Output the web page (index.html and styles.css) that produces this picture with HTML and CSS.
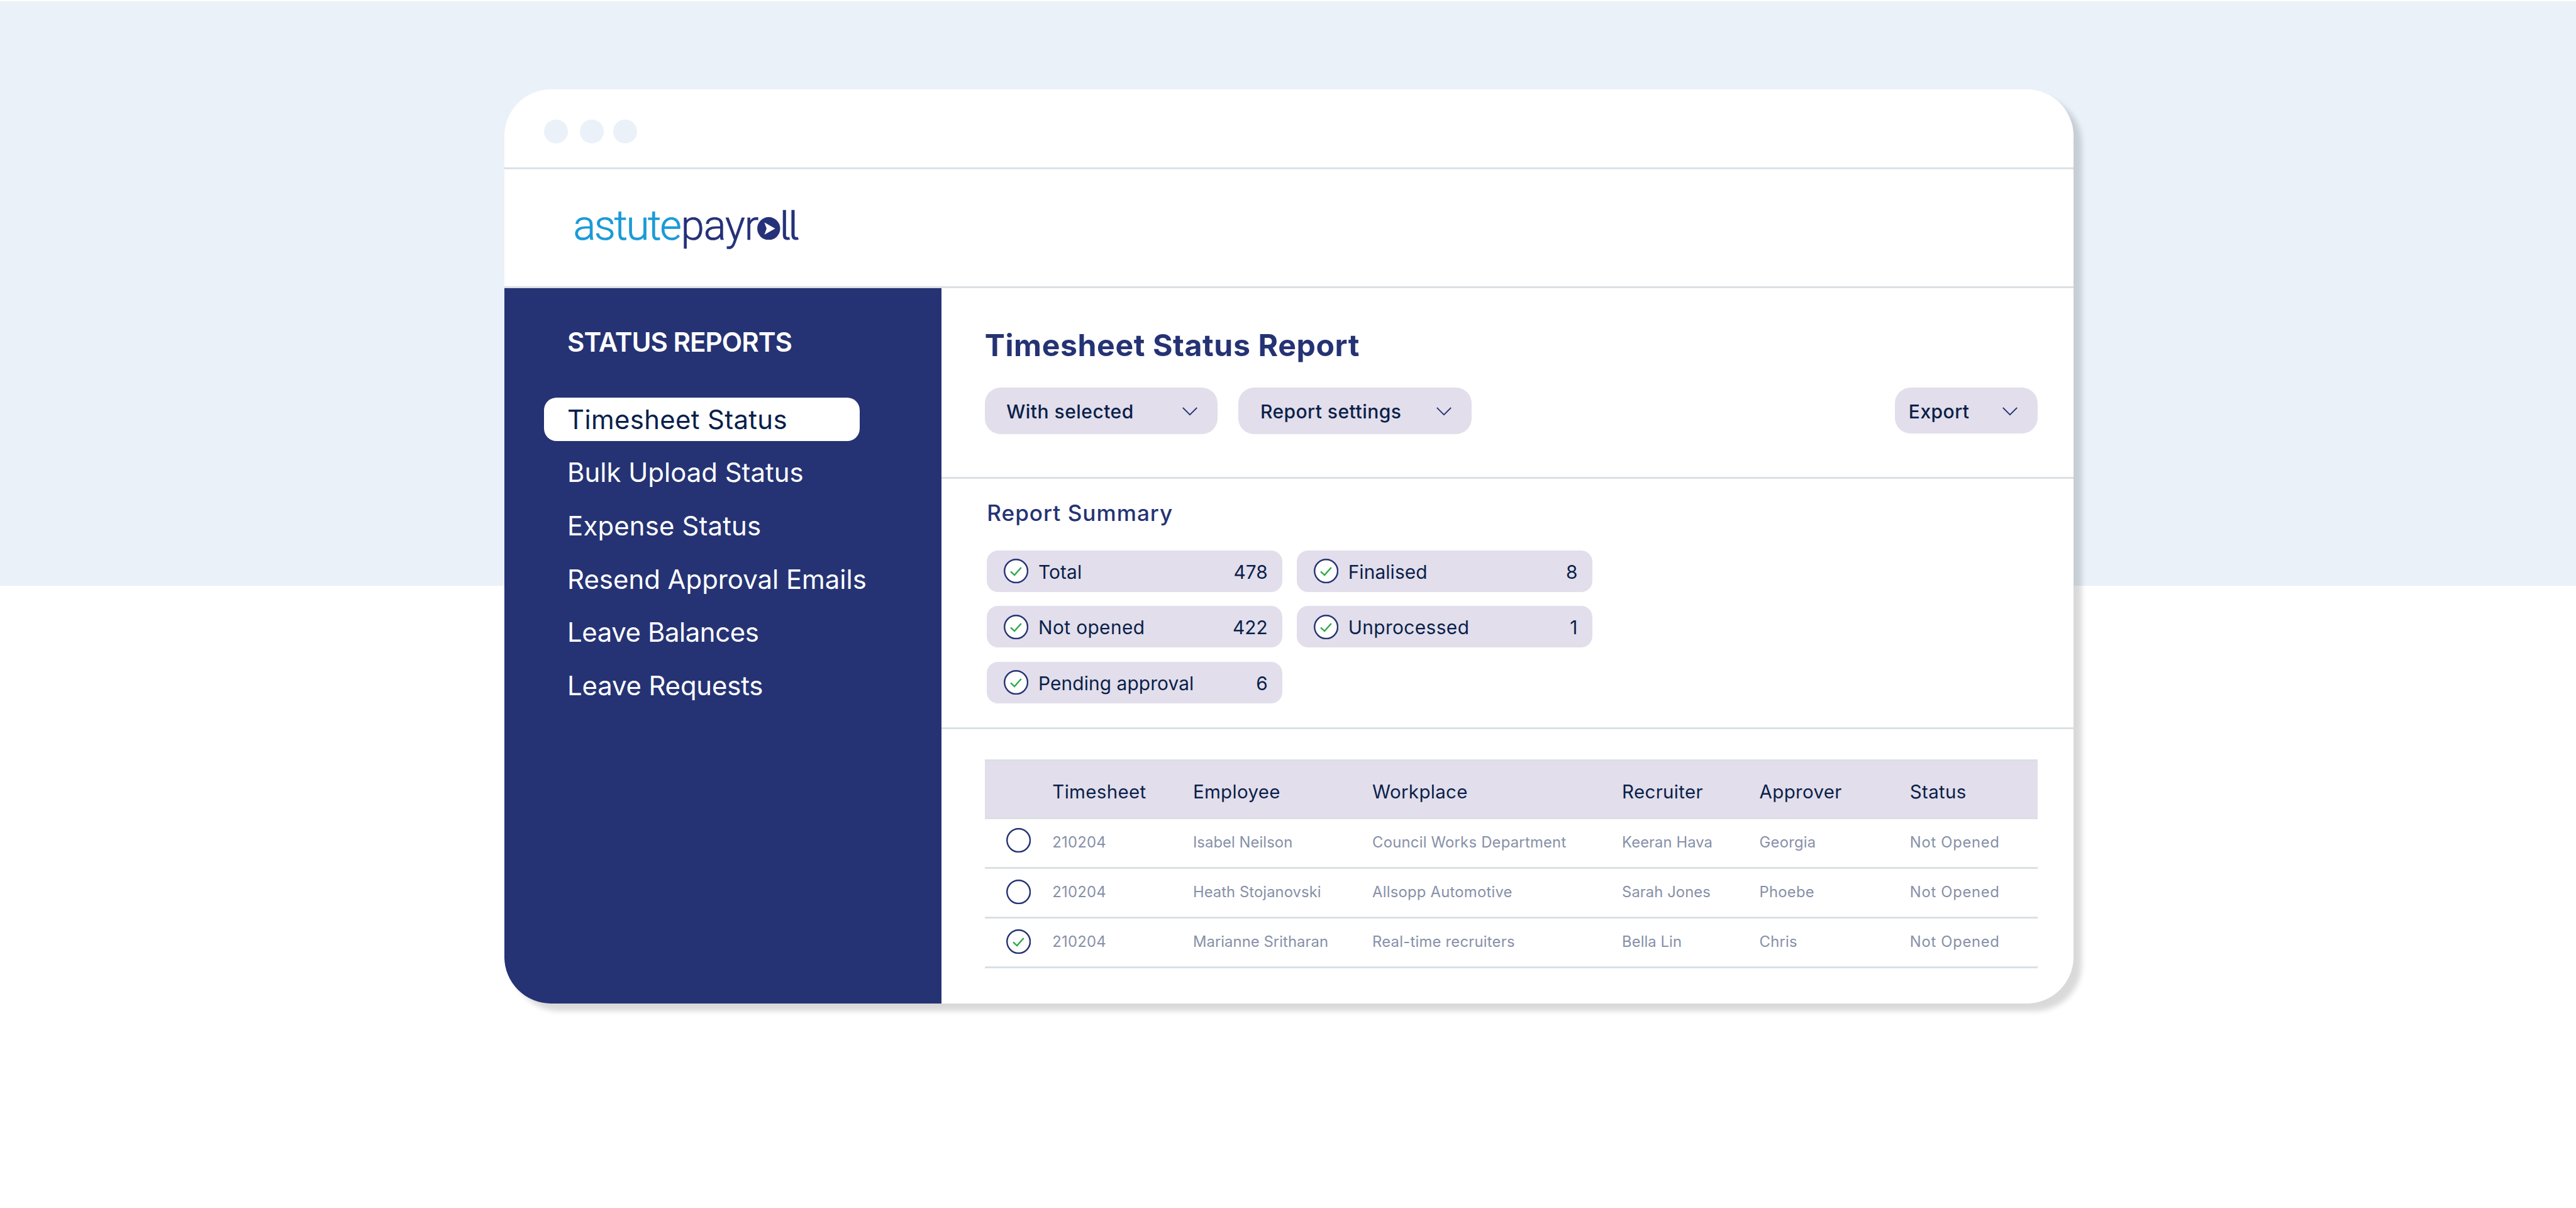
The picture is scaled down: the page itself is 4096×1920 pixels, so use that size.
FILE: index.html
```html
<!DOCTYPE html>
<html lang="en">
<head>
<meta charset="utf-8">
<title>Timesheet Status Report</title>
<link rel="stylesheet" href="styles.css">
</head>
<body>
<svg class="defs" aria-hidden="true">
  <symbol id="check" viewBox="0 0 39 39">
    <circle cx="19.5" cy="19.5" r="18.3" fill="#fff" stroke="#253374" stroke-width="2.4"/>
    <path d="M11 20.3l6 5.6L27.6 14" fill="none" stroke="#2ea84a" stroke-width="2.4"/>
  </symbol>
  <symbol id="ring" viewBox="0 0 39 39">
    <circle cx="19.5" cy="19.5" r="18.3" fill="#fff" stroke="#253374" stroke-width="2.4"/>
  </symbol>
  <symbol id="chevron" viewBox="0 0 24 14">
    <path d="M.8 1L12 12.2 23.2 1" fill="none" stroke="#253374" stroke-width="1.8"/>
  </symbol>
</svg>
<div class="window">
  <div class="titlebar"><i class="dot"></i><i class="dot"></i><i class="dot"></i></div>
  <header class="brand">
    <div class="logo">
      <span class="logo-astute">astute</span><span class="logo-pay">payr</span>
      <svg class="logo-o" viewBox="0 0 37 37"><circle cx="18.5" cy="18.5" r="18.4" fill="#253179"/><path d="M11.5 8.7L28.9 18.5 11.5 28.3 15.1 18.5z" fill="#fff"/></svg>
      <span class="logo-ll">ll</span>
    </div>
  </header>
  <div class="body">
    <aside class="sidebar">
      <h2>STATUS REPORTS</h2>
      <nav>
        <a class="active">Timesheet Status</a>
        <a>Bulk Upload Status</a>
        <a>Expense Status</a>
        <a>Resend Approval Emails</a>
        <a>Leave Balances</a>
        <a>Leave Requests</a>
      </nav>
    </aside>
    <main>
      <section class="toolbar">
        <h1>Timesheet Status Report</h1>
        <div class="buttons">
          <button>With selected<svg class="chevron"><use href="#chevron"/></svg></button>
          <button>Report settings<svg class="chevron"><use href="#chevron"/></svg></button>
          <button class="export">Export<svg class="chevron"><use href="#chevron"/></svg></button>
        </div>
      </section>
      <section class="summary">
        <h3>Report Summary</h3>
        <div class="pills">
          <div class="pill"><svg class="mark"><use href="#check"/></svg><span>Total</span><b>478</b></div>
          <div class="pill"><svg class="mark"><use href="#check"/></svg><span>Finalised</span><b>8</b></div>
          <div class="pill loose"><svg class="mark"><use href="#check"/></svg><span>Not opened</span><b>422</b></div>
          <div class="pill loose"><svg class="mark"><use href="#check"/></svg><span>Unprocessed</span><b>1</b></div>
          <div class="pill"><svg class="mark"><use href="#check"/></svg><span>Pending approval</span><b>6</b></div>
        </div>
      </section>
      <section class="report">
        <div class="row head"><span></span><span>Timesheet</span><span>Employee</span><span>Workplace</span><span>Recruiter</span><span>Approver</span><span>Status</span></div>
        <div class="row first"><svg class="mark"><use href="#ring"/></svg><span>210204</span><span class="name">Isabel Neilson</span><span>Council Works Department</span><span class="name">Keeran Hava</span><span>Georgia</span><span class="status">Not Opened</span></div>
        <div class="row"><svg class="mark"><use href="#ring"/></svg><span>210204</span><span class="name">Heath Stojanovski</span><span>Allsopp Automotive</span><span class="name">Sarah Jones</span><span>Phoebe</span><span class="status">Not Opened</span></div>
        <div class="row"><svg class="mark"><use href="#check"/></svg><span>210204</span><span class="name">Marianne Sritharan</span><span>Real-time recruiters</span><span class="name">Bella Lin</span><span>Chris</span><span class="status">Not Opened</span></div>
      </section>
    </main>
  </div>
</div>
</body>
</html>
```
FILE: styles.css
```css
* { box-sizing: border-box; }

html, body { height: 100%; margin: 0; }

body {
  overflow: hidden;
  padding: 142px 0 0 802px;
  font-family: Inter, "Liberation Sans", sans-serif;
  color: #0a1f4a;
  background: linear-gradient(#fff 0 2px, #eaf1f9 2px 931px, #fff 931px);
}

h1, h2, h3 { margin: 0; font-weight: 600; white-space: nowrap; }

.defs { display: none; }

.window {
  display: flex;
  flex-direction: column;
  width: 2495px;
  height: 1453px;
  overflow: hidden;
  border-radius: 74px;
  background: #fff;
  box-shadow: 13px 12px 9px rgba(0, 0, 0, .15);
}

.titlebar {
  display: flex;
  height: 127px;
  padding: 47.5px 0 0 62.7px;
  border-bottom: 3px solid #dbe0e3;
}
.dot { width: 38px; height: 38px; border-radius: 50%; background: #eaf1f9; }
.dot + .dot { margin-left: 19px; }
.dot + .dot + .dot { margin-left: 15.7px; }

.brand {
  display: flex;
  align-items: center;
  height: 189px;
  padding: 0 0 8px 109.5px;
  border-bottom: 3px solid #dbe0e3;
}
.logo {
  display: flex;
  align-items: center;
  font: 300 66.8px/80px Roboto, "Liberation Sans", sans-serif;
  color: #253179;
  -webkit-text-stroke: .7px currentColor;
}
.logo-astute { letter-spacing: -.035em; color: #1b9ad7; }
.logo-pay { margin-left: 1.5px; letter-spacing: -.0163em; }
.logo-o { width: 36.6px; height: 36.6px; margin: 10px 0 0 -1px; }
.logo-ll {
  margin: -1px 0 0 -1px;
  font-family: Inter, "Liberation Sans", sans-serif;
  font-size: 64px;
  font-feature-settings: "cv05";
  letter-spacing: -.045em;
}

.body { display: flex; flex: 1; }

.sidebar {
  width: 694.5px;
  padding: 60px 0 0 62.6px;
  color: #fff;
  background: #253374;
}
.sidebar h2 {
  margin: 0 0 62.6px 37.5px;
  font-size: 42.2px;
  line-height: 51px;
  letter-spacing: -.024em;
}
nav { display: flex; flex-direction: column; gap: 15px; }
nav a {
  width: 502.6px;
  height: 69.7px;
  padding-left: 37.5px;
  border-radius: 20px;
  font-size: 41.9px;
  line-height: 69.7px;
  white-space: nowrap;
}
nav .active { color: #0a1f4a; background: #fff; letter-spacing: .008em; }
nav a:nth-child(3) { letter-spacing: .0035em; }
nav a:nth-child(5) { letter-spacing: -.01em; }
nav a:nth-child(6) { letter-spacing: -.004em; }

main { flex: 1; display: flex; flex-direction: column; }
section { padding-left: 69.2px; padding-right: 57.2px; }

.toolbar { height: 303px; padding-top: 62px; border-bottom: 3px solid #dbe0e3; }
.toolbar h1 {
  margin-bottom: 38px;
  font-size: 48.2px;
  font-weight: 700;
  line-height: 58px;
  letter-spacing: .0122em;
  color: #253374;
}
.buttons { display: flex; gap: 33px; }
button {
  display: flex;
  align-items: center;
  justify-content: space-between;
  width: 370.7px;
  height: 74px;
  padding: 2px 32px 0 34.5px;
  border: 0;
  border-radius: 25px;
  font: 500 30px Inter, "Liberation Sans", sans-serif;
  letter-spacing: .016em;
  color: #0a1f4a;
  background: #e2deeb;
}
.export { width: 227px; height: 73px; margin-left: auto; padding-left: 22px; padding-right: 31.5px; }
.chevron { width: 24px; height: 14px; }

.summary { height: 398px; padding-top: 33.4px; padding-left: 72.7px; border-bottom: 3px solid #dbe0e3; }
.summary h3 {
  margin-bottom: 38.6px;
  font-size: 35.1px;
  font-weight: 500;
  line-height: 42px;
  letter-spacing: .0297em;
  color: #253374;
}
.pills { display: grid; grid-template-columns: 470.2px 470.2px; grid-auto-rows: 66px; gap: 22.4px; }
.pill {
  display: flex;
  align-items: center;
  padding: 0 23.5px 0 27.2px;
  border-radius: 18px;
  font-size: 29.8px;
  letter-spacing: .004em;
  background: #e2deeb;
}
.loose { letter-spacing: .014em; }
.pill span { padding-top: 2px; margin-left: 15.5px; }
.pill b { padding-top: 2px; margin-left: auto; font-weight: 400; letter-spacing: .003em; }
.mark { width: 39.2px; height: 39.2px; }

.report { flex: 1; padding-top: 48px; }
.row {
  display: grid;
  grid-template-columns: 107.6px 223.6px 285.2px 397px 218.5px 239.3px 1fr;
  align-items: center;
  height: 79px;
  border-bottom: 3px solid #dbe0e3;
  font-size: 23.8px;
  letter-spacing: .01em;
  white-space: nowrap;
  color: #8790a8;
}
.row span { padding-bottom: 3px; }
.row .mark { margin: 0 0 3px 33.9px; }
.row .name { letter-spacing: .003em; }
.row .status { letter-spacing: .029em; }
.first .mark { margin-bottom: 9px; }
.head {
  height: 95px;
  border-top: 3px solid #dbe0e3;
  font-size: 29.5px;
  letter-spacing: .011em;
  color: #0a1f4a;
  background: #e2deeb;
}
.head span { padding: 7px 0 0; }
```
